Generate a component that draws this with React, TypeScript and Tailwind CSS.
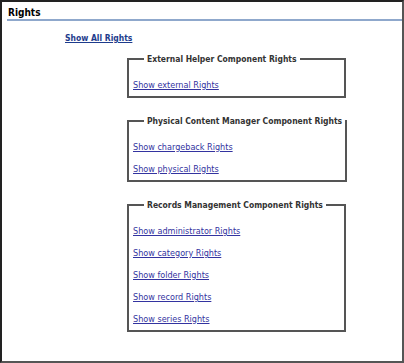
const groups = [
  { title: 'External Helper Component Rights', links: ['Show external Rights'] },
  { title: 'Physical Content Manager Component Rights', links: ['Show chargeback Rights', 'Show physical Rights'] },
  {
    title: 'Records Management Component Rights',
    links: ['Show administrator Rights', 'Show category Rights', 'Show folder Rights', 'Show record Rights', 'Show series Rights'],
  },
];

export default function App() {
  return (
    <div
      className="w-[404px] h-[363px] bg-white border-2 border-t-[#222] border-l-[#222] border-r-[#555] border-b-[#555] overflow-hidden"
      style={{ fontFamily: '"DejaVu Sans Condensed", "DejaVu Sans", Verdana, sans-serif' }}
    >
      <div className="ml-[5px] mt-[5px] border-b-2 border-[#8fa8cc]">
        <h1 className="text-[10px] leading-[12px] font-bold text-black pl-[1px]">Rights</h1>
      </div>
      <div className="ml-[63px] mt-[3px]">
        <a href="#" className="text-[8.5px] leading-[12px] font-bold text-[#1e3c8c] underline">Show All Rights</a>
      </div>
      <div className="ml-[125px] mt-[4px] flex flex-col gap-[16px] w-[219px]">
        {groups.map((g) => (
          <fieldset key={g.title} className="border-2 border-[#555] pl-[4px] pt-[8px]">
            <legend className="ml-[11px] px-[3px] text-[8.5px] leading-[14px] font-bold text-[#333] whitespace-nowrap">{g.title}</legend>
            {g.links.map((l) => (
              <div key={l} className="text-[9px] leading-[22px]">
                <a href="#" className="text-[#3333a0] underline">{l}</a>
              </div>
            ))}
          </fieldset>
        ))}
      </div>
    </div>
  );
}
